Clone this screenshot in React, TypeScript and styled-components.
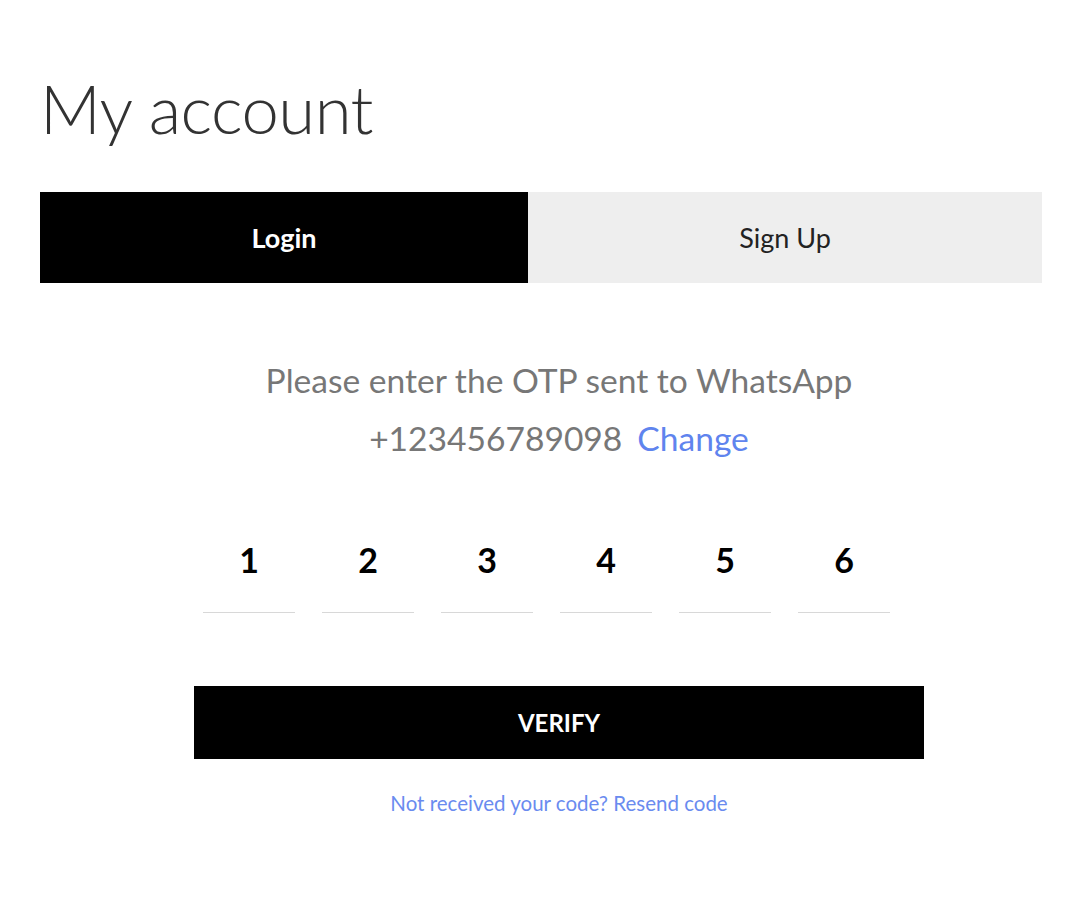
import React from "react";
import styled, { createGlobalStyle } from "styled-components";

const Global = createGlobalStyle`
  body {
    margin: 0;
    background: #ffffff;
    font-family: "Lato", "Open Sans", sans-serif;
  }
`;

const Page = styled.div`
  padding: 60px 38px 0 40px;
  display: flex;
  flex-direction: column;
`;

const Title = styled.h1`
  margin: 0;
  font-family: "Lato", sans-serif;
  font-weight: 300;
  font-size: 67px;
  line-height: 96px;
  color: #333333;
  letter-spacing: -0.5px;
`;

const Tabs = styled.div`
  margin-top: 36px;
  display: grid;
  grid-template-columns: 488px 1fr;
  height: 91px;
`;

const Tab = styled.button<{ $active?: boolean }>`
  border: none;
  margin: 0;
  padding: 0;
  font-family: "Lato", sans-serif;
  font-size: 27px;
  font-weight: ${(p) => (p.$active ? 700 : 400)};
  background: ${(p) => (p.$active ? "#000000" : "#eeeeee")};
  color: ${(p) => (p.$active ? "#ffffff" : "#222222")};
  display: flex;
  align-items: center;
  justify-content: center;
`;

const Form = styled.div`
  width: 730px;
  margin: 68px 0 0 154px;
  display: flex;
  flex-direction: column;
  align-items: center;
`;

const Message = styled.p`
  margin: 0;
  font-family: "Lato", sans-serif;
  font-size: 33.6px;
  line-height: 58px;
  color: #777777;
  text-align: center;
`;

const ChangeLink = styled.a`
  color: #5f84ee;
  text-decoration: none;
  margin-left: 15px;
`;

const OtpRow = styled.div`
  align-self: flex-start;
  margin: 60px 0 0 9px;
  display: flex;
  gap: 27px;
`;

const OtpCell = styled.div`
  width: 92px;
  height: 86px;
  border-bottom: 1px solid #d8d8d8;
  display: flex;
  align-items: center;
  justify-content: center;
  font-family: "Lato", sans-serif;
  font-weight: 700;
  font-size: 34px;
  color: #000000;
  padding-bottom: 20px;
  box-sizing: border-box;
`;

const VerifyButton = styled.button`
  margin-top: 73px;
  width: 730px;
  height: 73px;
  border: none;
  background: #000000;
  color: #ffffff;
  font-family: "Lato", sans-serif;
  font-weight: 700;
  font-size: 24px;
`;

const Resend = styled.a`
  margin-top: 32px;
  font-family: "Lato", sans-serif;
  font-size: 20.5px;
  color: #6a8bef;
  text-decoration: none;
`;

export default function App() {
  const digits = ["1", "2", "3", "4", "5", "6"];
  return (
    <>
      <Global />
      <Page>
        <Title>My account</Title>
        <Tabs>
          <Tab $active>Login</Tab>
          <Tab>Sign Up</Tab>
        </Tabs>
        <Form>
          <Message>Please enter the OTP sent to WhatsApp</Message>
          <Message>
            +123456789098
            <ChangeLink href="#">Change</ChangeLink>
          </Message>
          <OtpRow>
            {digits.map((d) => (
              <OtpCell key={d}>{d}</OtpCell>
            ))}
          </OtpRow>
          <VerifyButton>VERIFY</VerifyButton>
          <Resend href="#">Not received your code? Resend code</Resend>
        </Form>
      </Page>
    </>
  );
}
